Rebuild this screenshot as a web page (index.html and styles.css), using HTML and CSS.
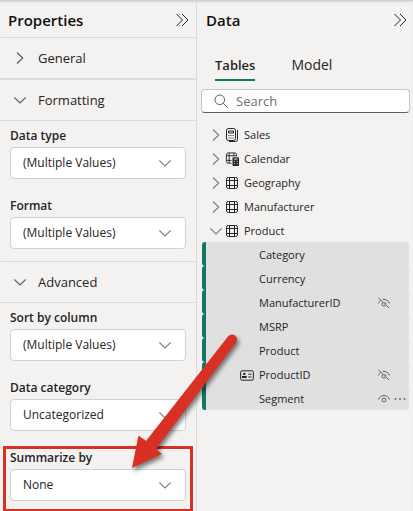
FILE: index.html
```html
<!DOCTYPE html>
<html lang="en">
<head>
<meta charset="utf-8">
<meta name="viewport" content="width=device-width, initial-scale=1">
<title>Model view</title>
<link rel="stylesheet" href="styles.css">
</head>
<body>
<svg class="defs" width="0" height="0" aria-hidden="true">
  <symbol id="collapse" viewBox="0 0 14 14"><path d="M1.5 1l6 6-6 6M7 1l6 6-6 6"/></symbol>
  <symbol id="right" viewBox="0 0 12 12"><path d="M3 .5L8.700 6 3 11.500"/></symbol>
  <symbol id="down" viewBox="0 0 12 12"><path d="M.3 3.500L6 9l5.700-5.500"/></symbol>
  <symbol id="table" viewBox="0 0 14 14"><rect x="1.500" y="1.500" width="11" height="11" rx="2"/><path d="M4.500 1.500v11M9.500 1.500v11M1.500 4.500h11M1.500 9.500h11"/></symbol>
  <symbol id="calc" viewBox="0 0 14 16"><rect x="1.500" y="1.500" width="9" height="12" rx="2"/><path d="M3.500 4h5v2h-5zM12.500 3v9.500q0 2-2 2H4"/><path d="M3.500 8.500h1M5.500 8.500h1M7.500 8.500h1M3.500 11h1M5.500 11h1M7.500 11h1"/></symbol>
  <symbol id="calctable" viewBox="0 0 15 16"><path d="M7 12.500H3.500q-2 0-2-2v-7q0-2 2-2h7q2 0 2 2V5M4.500 1.500v11M9.500 1.500V5M1.500 4.500h11M1.500 9.500H7"/><rect class="solid" x="8" y="6" width="7" height="9.500" rx="1"/><path class="light" d="M9.500 8h4M9.500 10.500h1M12.500 10.500h1M9.500 13h1M12.500 13h1"/></symbol>
  <symbol id="eye" viewBox="0 0 12 12"><path d="M.5 6.500C1.200 4 3.300 2.500 6 2.500S10.800 4 11.500 6.500"/><circle cx="6" cy="7" r="1.900"/></symbol>
  <symbol id="eyeoff" viewBox="0 0 12 12"><path d="M.5 6.500C1 5 2 3.800 3.200 3.200M5 2.500c3-.5 5.700 1 6.500 4M.5 1l10.500 10M5 5.500a1.900 1.900 0 1 0 2.500 2.600M6.500 5.200q1.500.3 1.600 1.600"/></symbol>
  <symbol id="card" viewBox="0 0 14 11"><rect x=".6" y=".8" width="12.800" height="9.400" rx="1.500"/><circle class="solid" cx="4.300" cy="3.900" r="1.200"/><path class="solid" d="M2 8V6h4.600v2z"/><path d="M8.300 4.200h3.200M8.300 7h3.200"/></symbol>
</svg>
<div class="app">
  <aside class="properties">
    <header class="pane-head"><h2>Properties</h2><button class="icon-btn" aria-label="Collapse properties"><svg class="collapse"><use href="#collapse"/></svg></button></header>
    <button class="section closed"><svg class="chev"><use href="#right"/></svg>General</button>
    <button class="section"><svg class="chev"><use href="#down"/></svg>Formatting</button>
    <div class="field"><label for="type">Data type</label><div class="pick"><select id="type"><option>(Multiple Values)</option></select><svg class="chev"><use href="#down"/></svg></div></div>
    <div class="field"><label for="format">Format</label><div class="pick"><select id="format"><option>(Multiple Values)</option></select><svg class="chev"><use href="#down"/></svg></div></div>
    <button class="section ruled"><svg class="chev"><use href="#down"/></svg>Advanced</button>
    <div class="field"><label for="sort">Sort by column</label><div class="pick"><select id="sort"><option>(Multiple Values)</option></select><svg class="chev"><use href="#down"/></svg></div></div>
    <div class="field"><label for="category">Data category</label><div class="pick"><select id="category"><option>Uncategorized</option></select><svg class="chev"><use href="#down"/></svg></div></div>
    <div class="field marked"><label for="summarize">Summarize by</label><div class="pick"><select id="summarize"><option>None</option></select><svg class="chev"><use href="#down"/></svg></div></div>
  </aside>
  <main class="data">
    <header class="pane-head"><h2>Data</h2><button class="icon-btn" aria-label="Collapse data"><svg class="collapse"><use href="#collapse"/></svg></button></header>
    <nav class="tabs"><button class="tab active">Tables</button><button class="tab">Model</button></nav>
    <div class="search"><svg viewBox="0 0 14 14"><circle cx="5.800" cy="5.800" r="4.800"/><path d="M9.300 9.300l4.200 4.200"/></svg><input type="search" placeholder="Search" aria-label="Search"></div>
    <ul class="tree">
      <li class="row"><svg class="chev"><use href="#right"/></svg><svg class="kind tall"><use href="#calc"/></svg>Sales</li>
      <li class="row"><svg class="chev"><use href="#right"/></svg><svg class="kind tall"><use href="#calctable"/></svg>Calendar</li>
      <li class="row"><svg class="chev"><use href="#right"/></svg><svg class="kind"><use href="#table"/></svg>Geography</li>
      <li class="row"><svg class="chev"><use href="#right"/></svg><svg class="kind"><use href="#table"/></svg>Manufacturer</li>
      <li class="row"><svg class="chev"><use href="#down"/></svg><svg class="kind"><use href="#table"/></svg>Product</li>
    </ul>
    <ul class="columns">
      <li class="col"><span class="lead"></span><span class="name">Category</span></li>
      <li class="col"><span class="lead"></span><span class="name">Currency</span></li>
      <li class="col"><span class="lead"></span><span class="name">ManufacturerID</span><svg class="eye"><use href="#eyeoff"/></svg><span class="more"></span></li>
      <li class="col"><span class="lead"></span><span class="name">MSRP</span></li>
      <li class="col"><span class="lead"></span><span class="name">Product</span></li>
      <li class="col"><span class="lead"><svg class="card"><use href="#card"/></svg></span><span class="name">ProductID</span><svg class="eye"><use href="#eyeoff"/></svg><span class="more"></span></li>
      <li class="col"><span class="lead"></span><span class="name">Segment</span><svg class="eye"><use href="#eye"/></svg><button class="more" aria-label="More options"><svg viewBox="0 0 12 4"><circle cx="1.500" cy="2" r=".9"/><circle cx="6" cy="2" r=".9"/><circle cx="10.500" cy="2" r=".9"/></svg></button></li>
    </ul>
  </main>
  <svg class="arrow" viewBox="0 0 120 150" aria-hidden="true"><path d="M12 138L18.500 105.500 26 111 108 6.500A5 5 0 0 1 116 12.500L36 119 42 124z"/></svg>
</div>
</body>
</html>
```
FILE: styles.css
```css
* { box-sizing: border-box; }

body {
  margin: 0;
  background: #f3f2f1;
  color: #252423;
  font: 12px/16px "Open Sans", "Noto Sans", sans-serif;
}

button, input, select { font: inherit; color: inherit; }
button { background: none; border: 0; padding: 0; }
ul { margin: 0; padding: 0; list-style: none; }
svg { fill: none; stroke: #252423; flex: none; display: block; }
.defs { position: absolute; }
.solid { fill: #252423; stroke: none; }
.light { stroke: #fff; }

.app {
  position: relative;
  display: grid;
  grid-template-columns: 197px minmax(0, 1fr);
  min-height: 100vh;
  box-shadow: inset 0 3px 3px -2px #bbb;
}

.properties { border-right: 1px solid #dcdbda; }

.pane-head {
  display: flex;
  align-items: center;
  justify-content: space-between;
  height: 37px;
  padding: 2px 7px 0 8px;
}
.pane-head h2 { margin: 0; font-size: 15px; line-height: 20px; font-weight: 600; color: #111; }
.collapse { width: 14px; height: 14px; }

.section {
  display: flex;
  align-items: center;
  gap: 12px;
  width: 100%;
  height: 41px;
  padding: 0 14px;
  border-bottom: 1px solid #dcdbda;
  font-size: 13px;
}
.section.closed { border-top: 1px solid #dcdbda; border-bottom-width: 2px; height: 43px; }
.section.ruled { border-top: 1px solid #dcdbda; height: 42px; }
.chev { width: 12px; height: 12px; stroke: #605e5c; stroke-width: 1.2; }

.field { position: relative; padding: 6px 10px 12px; }
.field label { display: block; height: 20px; line-height: 18px; font-weight: 600; }
.pick { display: grid; align-items: center; }
.pick > * { grid-area: 1 / 1; }
.pick select {
  appearance: none;
  width: 100%;
  height: 32px;
  padding: 0 32px 0 12px;
  border: 1px solid #d1d1d1;
  border-radius: 4px;
  background: #fff;
}
.pick .chev { justify-self: end; margin-right: 15px; pointer-events: none; stroke: #808080; }

.marked::after {
  content: "";
  position: absolute;
  inset: 3px 3px 1px;
  border: 3px solid #d93025;
  pointer-events: none;
}

.data .pane-head { padding-left: 9px; padding-right: 6px; }
.tabs { display: flex; gap: 36px; padding: 18px 18px 8px; }
.tab { height: 26px; padding-top: 2px; padding-bottom: 6px; font-size: 14px; line-height: 16px; border-bottom: 2px solid transparent; }
.tab.active { font-size: 13px; font-weight: 600; border-color: #117865; }

.search {
  display: flex;
  align-items: center;
  gap: 8px;
  height: 24px;
  margin: 0 3px 9px 4px;
  padding: 0 12px;
  border: 1px solid #c8c6c4;
  border-bottom-color: #605e5c;
  border-radius: 4px;
  background: #fff;
}
.search svg { width: 14px; height: 14px; stroke: #605e5c; }
.search input { flex: 1; min-width: 0; padding: 0; border: 0; outline: 0; background: none; font-size: 13px; }
.search input::placeholder { color: #707070; }

.row, .col { display: flex; align-items: center; height: 24px; padding-top: 2px; font-size: 11px; }
.row { padding-left: 13px; }
.row .chev { margin-right: 3px; stroke: #808080; }
.kind { width: 14px; height: 14px; margin-right: 5px; }
.kind.tall { height: 16px; }

.columns { margin: 0 4px 0 5px; }
.col { padding-right: 3px; border-left: 4px solid #117865; border-radius: 3px; background: #e0e0e0; }
.lead { width: 53px; padding-left: 34px; }
.card { width: 14px; height: 11px; }
.name { flex: 1; }
.eye { width: 12px; height: 12px; margin-right: 4px; stroke: #605e5c; stroke-width: 1; }
.more { width: 12px; }
.more svg { width: 12px; height: 4px; fill: #605e5c; stroke: none; }

.arrow {
  position: absolute;
  left: 120px;
  top: 330px;
  width: 120px;
  height: 150px;
  fill: #d93025;
  stroke: none;
  filter: drop-shadow(2px 3px 2px rgb(0 0 0 / 50%));
  pointer-events: none;
}
```
